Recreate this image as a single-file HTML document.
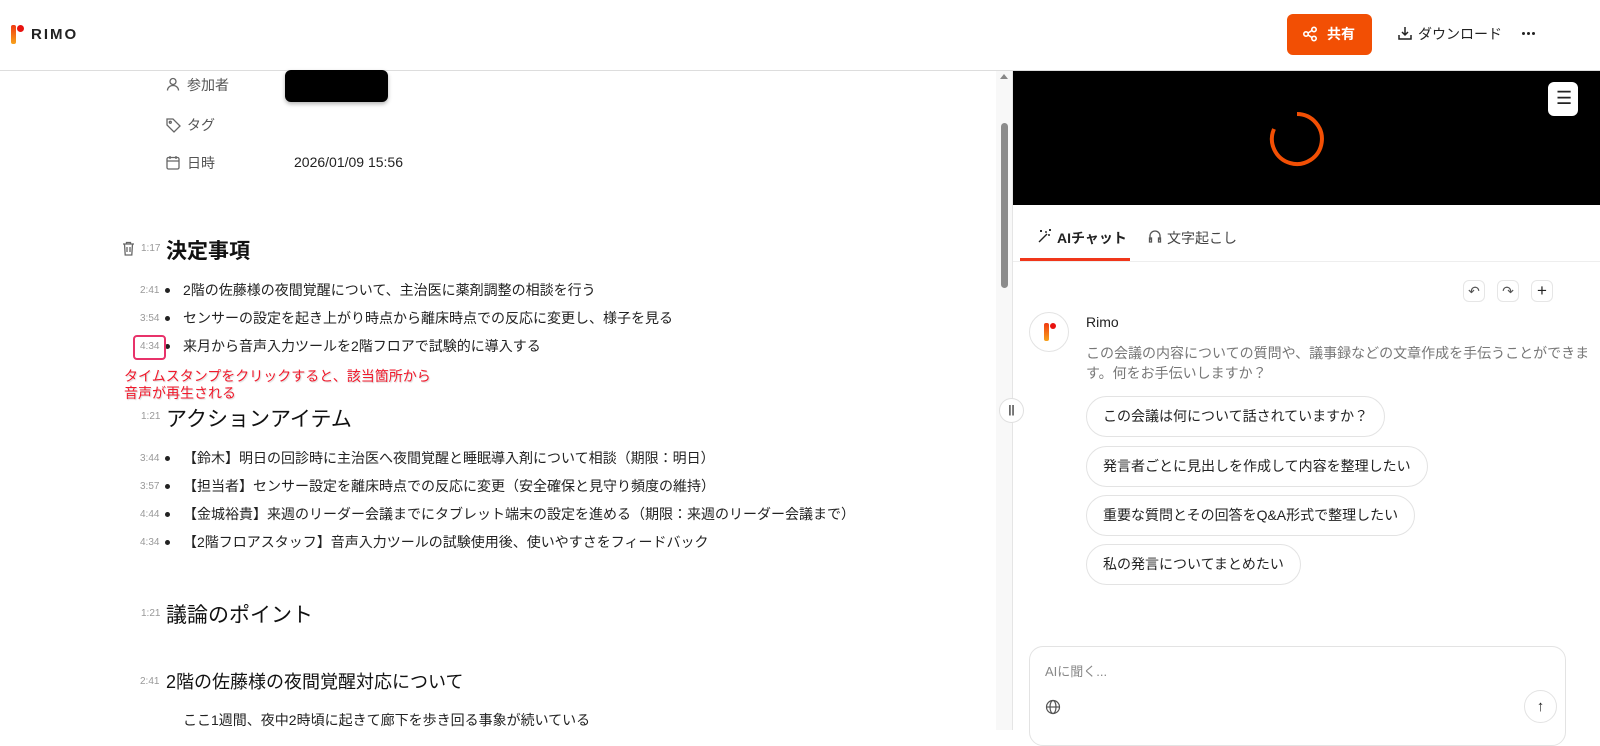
<!DOCTYPE html>
<html><head><meta charset="utf-8"><style>
*{margin:0;padding:0;box-sizing:border-box}
body{width:1600px;height:730px;overflow:hidden;background:#fff;font-family:"Liberation Sans","Noto Sans CJK JP",sans-serif;color:#222;position:relative}
.a{position:absolute;white-space:nowrap}
.ts{font-size:10px;color:#999}
.li{font-size:14px;color:#222}
.dot{width:5px;height:5px;border-radius:50%;background:#222}
.h2{font-size:21px;font-weight:700;color:#111}
.sug{position:absolute;left:1086px;height:41px;border:1px solid #e3e3e3;border-radius:21px;font-size:14px;padding:0 16px;line-height:39px;color:#222}
.ib{position:absolute;width:22px;height:22px;border:1px solid #e6e6e6;border-radius:6px;font-size:14px;text-align:center;line-height:20px;color:#555}
</style></head><body>
<!-- header -->
<div class="a" style="left:0;top:0;width:1600px;height:71px;border-bottom:1px solid #ddd"></div>
<div class="a" style="left:11px;top:25px;width:5px;height:19px;border-radius:2px;background:linear-gradient(#f03a12,#f7a21b)"></div>
<div class="a" style="left:17px;top:25px;width:7px;height:7px;border-radius:50%;background:#e8120f"></div>
<div class="a" style="left:31px;top:26px;font-size:15px;font-weight:700;letter-spacing:2px;color:#222">RIMO</div>
<div class="a" style="left:1287px;top:14px;width:85px;height:41px;background:#f24f04;border-radius:6px;color:#fff;font-size:14px;font-weight:700;line-height:41px;padding-left:40px">共有</div>
<svg class="a" style="left:1302px;top:26px" width="16" height="16" viewBox="0 0 16 16" fill="none" stroke="#fff" stroke-width="1.6"><circle cx="4" cy="8" r="2.2"/><circle cx="12" cy="3.5" r="2.2"/><circle cx="12" cy="12.5" r="2.2"/><path d="M6 7l4-2.5M6 9l4 2.5"/></svg>
<svg class="a" style="left:1397px;top:25px" width="16" height="16" viewBox="0 0 16 16" fill="none" stroke="#222" stroke-width="1.5"><path d="M8 2v8M5 7l3 3 3-3M2 10v4h12v-4"/></svg>
<div class="a" style="left:1418px;top:24px;font-size:14px;color:#222">ダウンロード</div>
<div class="a" style="left:1522px;top:32px;width:3px;height:3px;border-radius:50%;background:#222;box-shadow:5px 0 #222,10px 0 #222"></div>
<!-- meta -->
<svg class="a" style="left:166px;top:77px" width="14" height="14" viewBox="0 0 14 14" fill="none" stroke="#666" stroke-width="1.3"><circle cx="7" cy="4.5" r="3"/><path d="M1.5 13.5c0-3 2.5-5 5.5-5s5.5 2 5.5 5"/></svg>
<div class="a" style="left:187px;top:75px;font-size:14px;color:#555">参加者</div>
<div class="a" style="left:285px;top:70px;width:103px;height:32px;background:#000;border-radius:6px;box-shadow:0 2px 4px rgba(0,0,0,.3)"></div>
<svg class="a" style="left:166px;top:118px" width="15" height="15" viewBox="0 0 15 15" fill="none" stroke="#666" stroke-width="1.3"><path d="M1 1h6l7 7-6 6-7-7z"/><circle cx="4.3" cy="4.3" r="1"/></svg>
<div class="a" style="left:187px;top:115px;font-size:14px;color:#555">タグ</div>
<svg class="a" style="left:166px;top:155px" width="14" height="15" viewBox="0 0 14 15" fill="none" stroke="#666" stroke-width="1.3"><rect x="1" y="2.5" width="12" height="11.5" rx="1.5"/><path d="M1 6h12M4 1v3M10 1v3"/></svg>
<div class="a" style="left:187px;top:153px;font-size:14px;color:#555">日時</div>
<div class="a" style="left:294px;top:154px;font-size:14px;color:#222">2026/01/09 15:56</div>
<!-- 決定事項 -->
<svg class="a" style="left:122px;top:241px" width="13" height="15" viewBox="0 0 13 15" fill="none" stroke="#666" stroke-width="1.3"><path d="M1 3h11M4.5 3V1.5h4V3M2.5 3l.7 11h6.6l.7-11M5 6v5M8 6v5"/></svg>
<div class="a ts" style="left:141px;top:243px">1:17</div>
<div class="a h2" style="left:166px;top:235px">決定事項</div>
<div class="a ts" style="left:140px;top:285px">2:41</div><div class="a dot" style="left:165px;top:288px"></div><div class="a li" style="left:183px;top:280px">2階の佐藤様の夜間覚醒について、主治医に薬剤調整の相談を行う</div>
<div class="a ts" style="left:140px;top:313px">3:54</div><div class="a dot" style="left:165px;top:316px"></div><div class="a li" style="left:183px;top:308px">センサーの設定を起き上がり時点から離床時点での反応に変更し、様子を見る</div>
<div class="a ts" style="left:140px;top:341px">4:34</div><div class="a dot" style="left:165px;top:344px"></div><div class="a li" style="left:183px;top:336px">来月から音声入力ツールを2階フロアで試験的に導入する</div>
<div class="a" style="left:133px;top:335px;width:33px;height:25px;border:2px solid #e8326a;border-radius:4px"></div>
<div class="a" style="left:124px;top:368px;font-size:14px;line-height:17px;color:#f0192b;text-shadow:1px 1px 1px rgba(0,0,0,.15)">タイムスタンプをクリックすると、該当箇所から<br>音声が再生される</div>
<!-- アクション -->
<div class="a ts" style="left:141px;top:411px">1:21</div>
<div class="a h2" style="left:166px;top:403px;font-weight:400">アクションアイテム</div>
<div class="a ts" style="left:140px;top:453px">3:44</div><div class="a dot" style="left:165px;top:456px"></div><div class="a li" style="left:183px;top:448px">【鈴木】明日の回診時に主治医へ夜間覚醒と睡眠導入剤について相談（期限：明日）</div>
<div class="a ts" style="left:140px;top:481px">3:57</div><div class="a dot" style="left:165px;top:484px"></div><div class="a li" style="left:183px;top:476px">【担当者】センサー設定を離床時点での反応に変更（安全確保と見守り頻度の維持）</div>
<div class="a ts" style="left:140px;top:509px">4:44</div><div class="a dot" style="left:165px;top:512px"></div><div class="a li" style="left:183px;top:504px">【金城裕貴】来週のリーダー会議までにタブレット端末の設定を進める（期限：来週のリーダー会議まで）</div>
<div class="a ts" style="left:140px;top:537px">4:34</div><div class="a dot" style="left:165px;top:540px"></div><div class="a li" style="left:183px;top:532px">【2階フロアスタッフ】音声入力ツールの試験使用後、使いやすさをフィードバック</div>
<div class="a ts" style="left:141px;top:608px">1:21</div>
<div class="a h2" style="left:166px;top:599px;font-weight:400">議論のポイント</div>
<div class="a ts" style="left:140px;top:676px">2:41</div>
<div class="a" style="left:166px;top:668px;font-size:18px;color:#111">2階の佐藤様の夜間覚醒対応について</div>
<div class="a li" style="left:183px;top:710px">ここ1週間、夜中2時頃に起きて廊下を歩き回る事象が続いている</div>
<!-- scrollbar -->
<div class="a" style="left:996px;top:71px;width:16px;height:659px;background:#f8f8f8"></div>
<div class="a" style="left:1000px;top:74px;width:0;height:0;border-left:4px solid transparent;border-right:4px solid transparent;border-bottom:5px solid #888"></div>
<div class="a" style="left:1001px;top:123px;width:7px;height:165px;background:#8c8c8c;border-radius:4px"></div>
<div class="a" style="left:1012px;top:71px;width:1px;height:659px;background:#e5e5e5"></div>
<div class="a" style="left:999px;top:398px;width:25px;height:25px;border:1px solid #e0e0e0;border-radius:50%;background:#fff;font-size:11px;text-align:center;line-height:23px;color:#444;font-weight:700">||</div>
<!-- right -->
<div class="a" style="left:1013px;top:71px;width:587px;height:134px;background:#000"></div>
<svg class="a" style="left:1268px;top:110px" width="58" height="58" viewBox="0 0 58 58"><path d="M29 4A25 25 0 1 1 6 19" fill="none" stroke="#f24f04" stroke-width="4"/></svg>
<div class="a" style="left:1548px;top:82px;width:30px;height:34px;background:#fff;border-radius:6px;font-size:18px;line-height:32px;padding-left:8px;color:#222">☰</div>
<svg class="a" style="left:1037px;top:228px" width="16" height="16" viewBox="0 0 16 16" fill="none" stroke="#222" stroke-width="1.4"><path d="M2 14L10 6M9 3v2M13 7h-2M4 2v2M3 3h2M13 1v2M12 2h2"/></svg>
<div class="a" style="left:1057px;top:228px;font-size:14px;color:#222;font-weight:700">AIチャット</div>
<div class="a" style="left:1020px;top:258px;width:110px;height:3px;background:#f0361a"></div>
<svg class="a" style="left:1148px;top:229px" width="14" height="15" viewBox="0 0 14 15" fill="none" stroke="#555" stroke-width="1.3"><path d="M2 11V7a5 5 0 0 1 10 0v4M1.5 9h2v4h-2zM10.5 9h2v4h-2z"/></svg>
<div class="a" style="left:1167px;top:228px;font-size:14px;color:#444">文字起こし</div>
<div class="a" style="left:1013px;top:261px;width:587px;height:1px;background:#eee"></div>
<div class="ib" style="left:1463px;top:280px">↶</div>
<div class="ib" style="left:1497px;top:280px">↷</div>
<div class="ib" style="left:1531px;top:280px;color:#222;font-size:17px">+</div>
<div class="a" style="left:1029px;top:312px;width:40px;height:40px;border:1px solid #e3e3e3;border-radius:50%"></div>
<div class="a" style="left:1044px;top:323px;width:5px;height:18px;border-radius:2px;background:linear-gradient(#f03a12,#f7a21b)"></div>
<div class="a" style="left:1050px;top:323px;width:6px;height:6px;border-radius:50%;background:#e8120f"></div>
<div class="a" style="left:1086px;top:314px;font-size:14px;color:#222">Rimo</div>
<div class="a" style="left:1086px;top:343px;font-size:14px;line-height:20px;color:#777">この会議の内容についての質問や、議事録などの文章作成を手伝うことができま<br>す。何をお手伝いしますか？</div>
<div class="sug" style="top:396px">この会議は何について話されていますか？</div>
<div class="sug" style="top:446px">発言者ごとに見出しを作成して内容を整理したい</div>
<div class="sug" style="top:495px">重要な質問とその回答をQ&amp;A形式で整理したい</div>
<div class="sug" style="top:544px">私の発言についてまとめたい</div>
<div class="a" style="left:1029px;top:646px;width:537px;height:100px;border:1px solid #e3e3e3;border-radius:14px"></div>
<div class="a" style="left:1045px;top:661px;font-size:13px;color:#888">AIに聞く...</div>
<svg class="a" style="left:1045px;top:699px" width="16" height="16" viewBox="0 0 16 16" fill="none" stroke="#555" stroke-width="1.2"><circle cx="8" cy="8" r="6.5"/><ellipse cx="8" cy="8" rx="3" ry="6.5"/><path d="M1.5 8h13"/></svg>
<div class="a" style="left:1524px;top:690px;width:33px;height:33px;border:1px solid #e3e3e3;border-radius:50%;text-align:center;line-height:31px;font-size:15px;color:#222">↑</div>
</body></html>
